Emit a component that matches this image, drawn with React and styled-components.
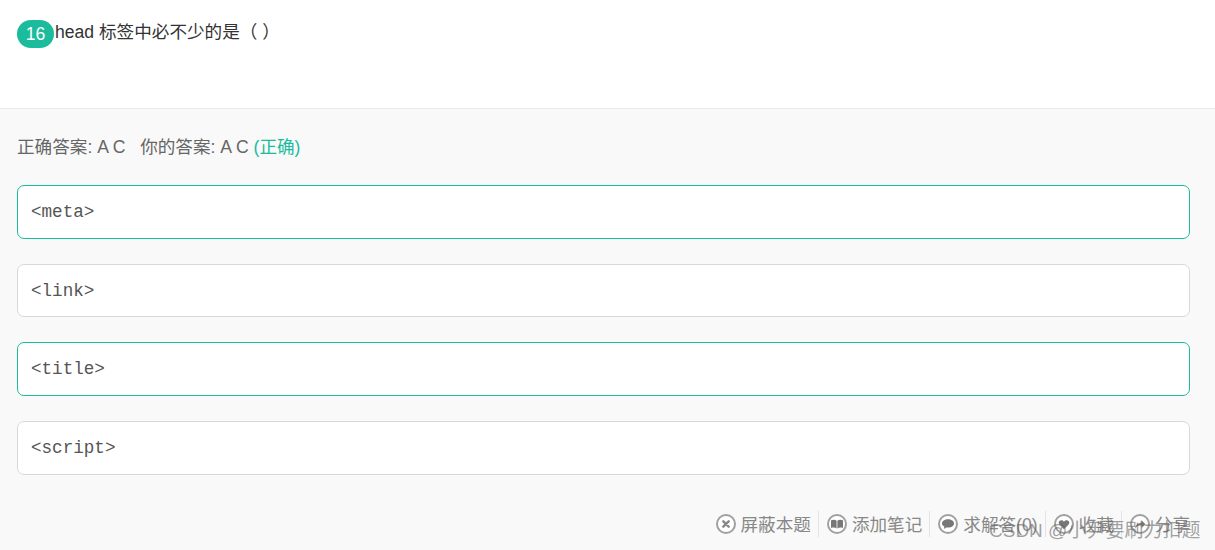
import React from "react";
import styled, { createGlobalStyle } from "styled-components";

const Global = createGlobalStyle`
	html, body {
		margin: 0;
		padding: 0;
		background: #f9f9f9;
	}
	body {
		font-family: "Liberation Sans", Arial, "Noto Sans CJK SC", sans-serif;
	}
`;

const Page = styled.div`
	position: relative;
	width: 1215px;
	height: 550px;
	overflow: hidden;
`;

const Question = styled.div`
	height: 109px;
	box-sizing: border-box;
	background: #fff;
	border-bottom: 1px solid #e8e8e8;
	padding: 20px 17px 0;
	display: flex;
	align-items: flex-start;
`;

const Badge = styled.span`
	width: 37px;
	height: 28px;
	border-radius: 14px;
	background: #1abc9c;
	color: #fff;
	font-size: 17.6px;
	line-height: 28px;
	text-align: center;
	flex: none;
`;

const Title = styled.div`
	font-size: 17.6px;
	line-height: 25px;
	color: #333;
	margin-left: 1px;
`;

const Answer = styled.section`
	padding: 26px 25px 0 17px;
`;

const Result = styled.div`
	font-size: 17.6px;
	line-height: 24px;
	color: #666;
	white-space: pre;
	margin-bottom: 26px;
`;

const Correct = styled.span`
	color: #1abc9c;
`;

const Options = styled.div`
	display: flex;
	flex-direction: column;
	gap: 25px;
`;

const Option = styled.div`
	height: 53.7px;
	box-sizing: border-box;
	background: #fff;
	border: 1px solid ${props => (props.$right ? "#1abc9c" : "#d8d8d8")};
	border-radius: 7px;
	padding: 0 13px;
	display: flex;
	align-items: center;
	font-family: "Liberation Mono", "Courier New", monospace;
	font-size: 17.6px;
	color: #555;
`;

const Toolbar = styled.div`
	display: flex;
	justify-content: flex-end;
	align-items: center;
	margin-top: 36px;
`;

const Action = styled.div`
	display: flex;
	align-items: center;
	height: 26px;
	padding: 0 ${props => (props.$last ? "0" : "7px")} 0 8px;
	border-right: ${props => (props.$last ? "none" : "1px solid #e3e3e3")};
	font-size: 17.6px;
	color: #888;
	white-space: nowrap;
`;

const IconWrap = styled.svg`
	width: 20px;
	height: 20px;
	margin-right: 5px;
	flex: none;
`;

const Watermark = styled.div`
	position: absolute;
	left: 989px;
	top: 516px;
	font-size: 19px;
	line-height: 30px;
	color: rgba(100, 100, 100, 0.6);
	white-space: nowrap;
`;

function Icon({ children }) {
	return (
		<IconWrap viewBox="0 0 20 20">
			<circle cx="10" cy="10" r="9" fill="#fff" stroke="#a0a0a0" strokeWidth="2" />
			{children}
		</IconWrap>
	);
}

const actions = [
	{
		label: "屏蔽本题",
		icon: <path d="M7.300 7.300l5.400 5.400M12.700 7.300l-5.400 5.400" stroke="#888" strokeWidth="2.400" strokeLinecap="round" fill="none" />,
	},
	{
		label: "添加笔记",
		icon: <path d="M4 6.200c2.300-.9 4.500-.7 5.600.5v7.800c-1.300-1-3.500-1.200-5.600-.5zM16 6.200c-2.300-.9-4.500-.7-5.600.5v7.800c1.300-1 3.500-1.200 5.600-.5z" fill="#777" />,
	},
	{
		label: "求解答(0)",
		icon: <path d="M10 5.200c3.300 0 6 1.900 6 4.200s-2.700 4.200-6 4.200c-.6 0-1.200-.1-1.800-.2L5.800 15l.6-2.500c-1.500-.8-2.400-1.900-2.400-3.100 0-2.300 2.700-4.200 6-4.200z" fill="#777" />,
	},
	{
		label: "收藏",
		icon: <path d="M10 15.200L5.600 10.800c-1.200-1.300-1.100-3.100.1-4 1.300-.9 3-.6 4.300 1 1.300-1.600 3-1.900 4.300-1 1.200.9 1.300 2.700.1 4z" fill="#777" />,
	},
	{
		label: "分享",
		icon: <path d="M5 14.500c.5-3.300 2.700-5.500 6.500-5.500V6.300l4 3.900-4 3.800v-2.700c-2.700 0-5 .7-6.500 3.200z" fill="#777" />,
	},
];

export default function App() {
	return (
		<Page>
			<Global />
			<Question>
				<Badge>16</Badge>
				<Title>head 标签中必不少的是（ ）</Title>
			</Question>
			<Answer>
				<Result>
					{"正确答案: A C   你的答案: A C "}
					<Correct>(正确)</Correct>
				</Result>
				<Options>
					<Option $right>&lt;meta&gt;</Option>
					<Option>&lt;link&gt;</Option>
					<Option $right>&lt;title&gt;</Option>
					<Option>&lt;script&gt;</Option>
				</Options>
				<Toolbar>
					{actions.map((a, i) => (
						<Action key={a.label} $last={i === actions.length - 1}>
							<Icon>{a.icon}</Icon>
							{a.label}
						</Action>
					))}
				</Toolbar>
			</Answer>
			<Watermark>CSDN @小尹要刷力扣题</Watermark>
		</Page>
	);
}
